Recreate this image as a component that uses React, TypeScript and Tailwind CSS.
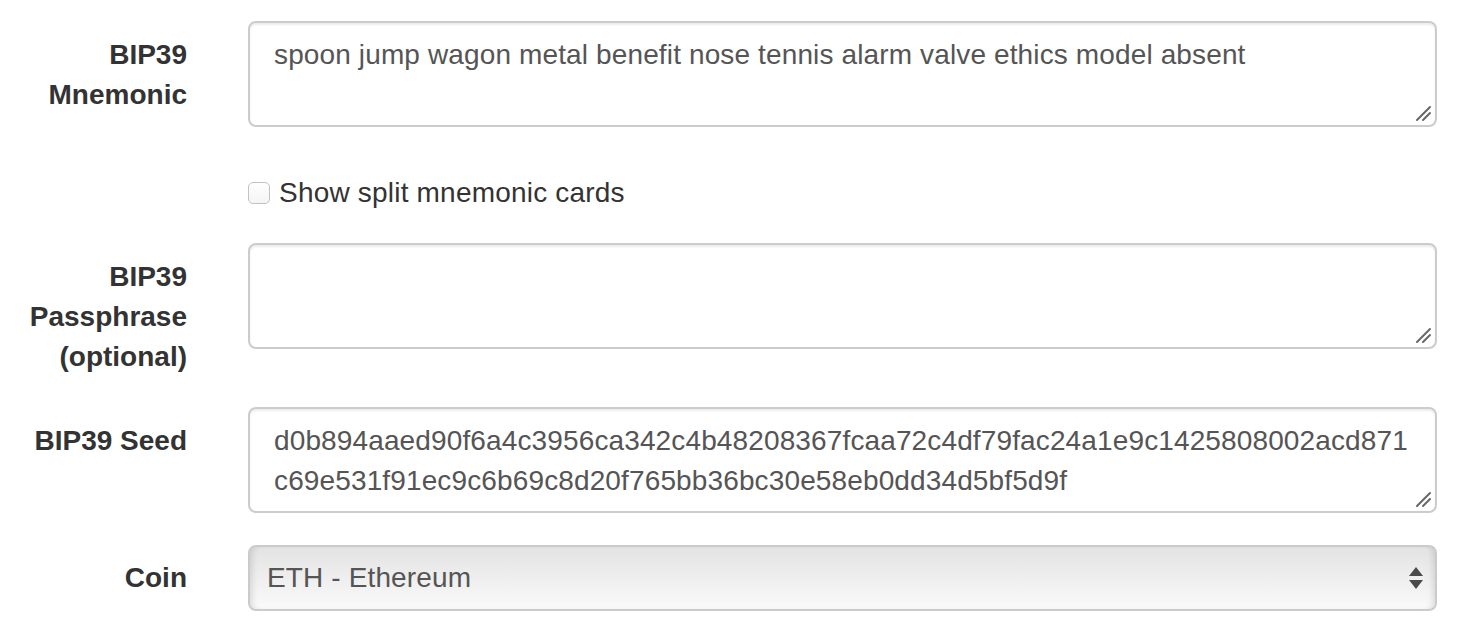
import React from "react";

function Grip() {
  return (
    <svg
      className="absolute right-[3px] bottom-[3px]"
      width="17"
      height="17"
      viewBox="0 0 17 17"
      aria-hidden="true"
    >
      <line x1="15" y1="2" x2="2" y2="15" stroke="#666" strokeWidth="2" strokeLinecap="round" />
      <line x1="15" y1="8" x2="8" y2="15" stroke="#666" strokeWidth="2" strokeLinecap="round" />
    </svg>
  );
}

function TextBox({ lines }: { lines: string[] }) {
  return (
    <div className="relative h-[106px] rounded-[8px] border-2 border-[#ccc] bg-white px-[24px] py-[12px] text-[#555] shadow-[inset_0_2px_2px_rgba(0,0,0,0.075)]">
      {lines.map((l, i) => (
        <div key={i} className="whitespace-nowrap">
          {l}
        </div>
      ))}
      <Grip />
    </div>
  );
}

function Row({
  label,
  children,
  labelPad = "pt-[14px]",
  className = "mb-[30px]",
}: {
  label: React.ReactNode;
  children: React.ReactNode;
  labelPad?: string;
  className?: string;
}) {
  return (
    <div className={`flex ${className}`}>
      <label className={`w-[187px] shrink-0 text-right font-bold tracking-normal ${labelPad}`}>{label}</label>
      <div className="ml-[61px] flex-1">{children}</div>
    </div>
  );
}

export default function App() {
  return (
    <div className="min-h-screen bg-white pt-[21px] pr-[31px] font-['Liberation_Sans',Arial,sans-serif] text-[28px] leading-[40px] tracking-[0.13px] text-[#333]">
      <Row label={<>BIP39<br />Mnemonic</>}>
        <TextBox lines={["spoon jump wagon metal benefit nose tennis alarm valve ethics model absent"]} />
      </Row>

      <div className="mb-[30px] ml-[248px] flex items-center pt-[16px]">
        <span className="mr-[9px] h-[22px] w-[22px] rounded-[5px] border border-[#c2c2c2] bg-gradient-to-b from-white to-[#f4f4f4]" />
        <span className="tracking-[0.2px]">Show split mnemonic cards</span>
      </div>

      <Row label={<>BIP39<br />Passphrase<br />(optional)</>}>
        <TextBox lines={[]} />
      </Row>

      <Row label="BIP39 Seed" className="mb-[32px]">
        <TextBox
          lines={[
            "d0b894aaed90f6a4c3956ca342c4b48208367fcaa72c4df79fac24a1e9c1425808002acd871",
            "c69e531f91ec9c6b69c8d20f765bb36bc30e58eb0dd34d5bf5d9f",
          ]}
        />
      </Row>

      <Row label="Coin" labelPad="pt-[13px]" className="">
        <div className="relative flex h-[66px] items-center rounded-[8px] border-2 border-[#cbcbcb] bg-gradient-to-b from-[#e3e3e3] to-[#fafafa] pl-[17px] text-[#555] shadow-[inset_6px_0_6px_-4px_rgba(0,0,0,0.12),inset_-6px_0_6px_-4px_rgba(0,0,0,0.12)]">
          ETH - Ethereum
          <svg
            className="absolute right-[12px] top-[20px]"
            width="14"
            height="22"
            viewBox="0 0 14 22"
            aria-hidden="true"
          >
            <polygon points="7,0 14,9 0,9" fill="#4a4a4a" />
            <polygon points="0,13 14,13 7,22" fill="#4a4a4a" />
          </svg>
        </div>
      </Row>
    </div>
  );
}
